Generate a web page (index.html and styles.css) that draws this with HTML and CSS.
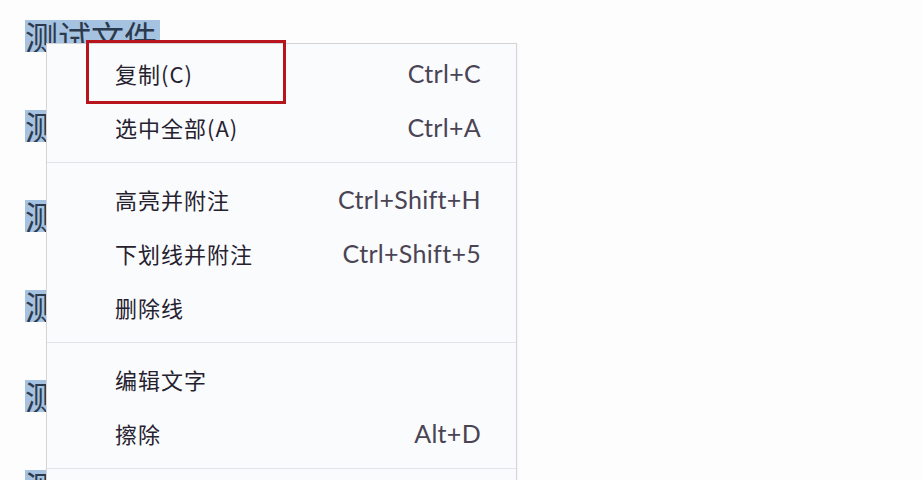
FILE: index.html
```html
<!DOCTYPE html>
<html lang="zh-CN">
<head>
<meta charset="utf-8">
<link rel="stylesheet" href="styles.css">
</head>
<body>
<div class="page">
  <div class="doc">
    <div class="line"><span class="sel">测试文件</span></div>
    <div class="line"><span class="sel">测试文件</span></div>
    <div class="line"><span class="sel">测试文件</span></div>
    <div class="line"><span class="sel">测试文件</span></div>
    <div class="line"><span class="sel">测试文件</span></div>
    <div class="line"><span class="sel">测试文件</span></div>
  </div>
  <div class="menu">
    <div class="group first">
      <div class="item"><span class="label">复制(C)</span><span class="key">Ctrl+C</span></div>
      <div class="item"><span class="label">选中全部(A)</span><span class="key">Ctrl+A</span></div>
    </div>
    <div class="group">
      <div class="item"><span class="label">高亮并附注</span><span class="key">Ctrl+Shift+H</span></div>
      <div class="item"><span class="label">下划线并附注</span><span class="key">Ctrl+Shift+5</span></div>
      <div class="item"><span class="label">删除线</span><span class="key"></span></div>
    </div>
    <div class="group">
      <div class="item"><span class="label">编辑文字</span><span class="key"></span></div>
      <div class="item"><span class="label">擦除</span><span class="key">Alt+D</span></div>
    </div>
    <div class="group last"></div>
  </div>
  <div class="mark"></div>
</div>
</body>
</html>
```
FILE: styles.css
```css
html, body {
  margin: 0;
  padding: 0;
  background: #fdfdfd;
}
.page {
  position: relative;
  width: 922px;
  height: 480px;
  overflow: hidden;
  background: #fdfdfd;
}
.doc {
  display: flex;
  flex-direction: column;
  gap: 58px;
  padding: 20px 0 0 25px;
}
.line {
  height: 32px;
}
.sel {
  display: inline-block;
  height: 32px;
  line-height: 32px;
  padding-right: 3px;
  font-family: "Noto Sans CJK SC", "Noto Sans", sans-serif;
  font-size: 33px;
  font-weight: 400;
  color: #2c3a4e;
  background: #a5c2e1;
  overflow: hidden;
  vertical-align: top;
}
.menu {
  position: absolute;
  left: 46px;
  top: 43px;
  width: 471px;
  box-sizing: border-box;
  border: 1px solid #d4d4d9;
  background: #fafbfd;
  box-shadow: 1px 1px 3px rgba(0, 0, 0, 0.04);
}
.group {
  padding: 9px 0 8px;
  border-top: 1px solid #e3e3e8;
}
.group.first {
  padding-top: 2px;
  border-top: none;
}
.group.last {
  height: 40px;
  padding: 0;
}
.item {
  display: flex;
  justify-content: space-between;
  align-items: center;
  height: 54px;
  padding: 0 35px 0 68px;
}
.label {
  font-family: "Noto Sans CJK SC", "Noto Sans", sans-serif;
  font-size: 22px;
  letter-spacing: 1px;
  color: #26212f;
}
.key {
  font-family: Lato, "Noto Sans", sans-serif;
  font-size: 25px;
  letter-spacing: 0.3px;
  color: #4a4454;
}
.mark {
  position: absolute;
  left: 86px;
  top: 40px;
  width: 200px;
  height: 64px;
  box-sizing: border-box;
  border: 3px solid #b8141d;
}
```
